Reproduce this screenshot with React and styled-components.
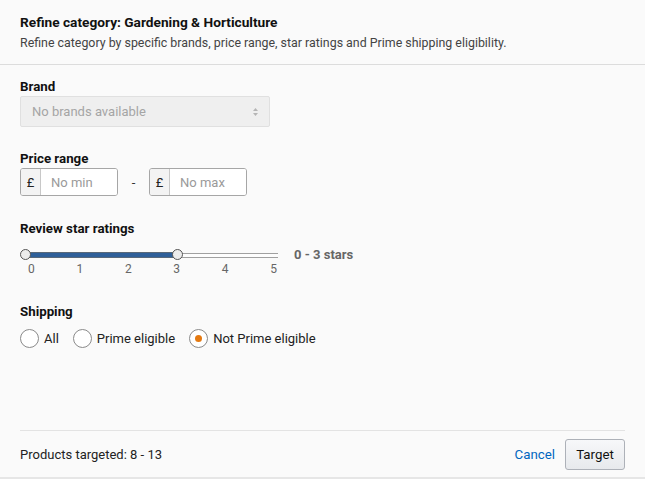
import React from "react";
import styled, { createGlobalStyle } from "styled-components";

const GlobalStyle = createGlobalStyle`
  html, body {
    margin: 0;
    padding: 0;
    background: #fafafa;
  }
  body {
    font-family: Roboto, "Noto Sans", sans-serif;
    color: #111;
  }
  * { box-sizing: border-box; }
`;

const Panel = styled.div`
  width: 645px;
  height: 479px;
  display: flex;
  flex-direction: column;
  background: #fafafa;
  border-bottom: 2px solid #e6e6e6;
`;

const Header = styled.div`
  height: 65px;
  padding: 14px 20px 0;
  border-bottom: 1px solid #dcdcdc;
`;

const Title = styled.h1`
  margin: 0;
  font-size: 13.7px;
  font-weight: 700;
  line-height: 17px;
`;

const Subtitle = styled.p`
  margin: 4px 0 0;
  font-size: 12.4px;
  line-height: 16px;
  color: #444;
`;

const Body = styled.div`
  flex: 1;
  padding: 13px 20px 0;
  display: flex;
  flex-direction: column;
`;

const Section = styled.div`
  display: flex;
  flex-direction: column;
  margin-top: ${(p) => p.$gap || 0}px;
`;

const Label = styled.div`
  font-size: 13.3px;
  font-weight: 700;
  line-height: 17px;
  margin-bottom: 1px;
`;

const Select = styled.div`
  width: 250px;
  height: 31px;
  display: flex;
  align-items: center;
  justify-content: space-between;
  padding: 0 10px 0 11px;
  background: #efefef;
  border: 1px solid #e0e0e0;
  border-radius: 2px;
  color: #a5a5a5;
  font-size: 13px;
`;

const Row = styled.div`
  display: flex;
  align-items: center;
`;

const PriceGroup = styled.div`
  display: flex;
  width: 98px;
  height: 28px;
  border: 1px solid #a6a6a6;
  border-radius: 3px;
  background: #fff;
  overflow: hidden;
`;

const Currency = styled.span`
  width: 20px;
  display: flex;
  align-items: center;
  justify-content: center;
  background: #f3f3f3;
  border-right: 1px solid #c8c8c8;
  font-size: 13px;
  color: #222;
`;

const PriceInput = styled.input`
  flex: 1;
  min-width: 0;
  border: none;
  outline: none;
  padding: 0 0 0 10px;
  font: inherit;
  font-size: 13px;
  background: #fff;
  &::placeholder { color: #9a9a9a; }
`;

const Dash = styled.span`
  width: 31px;
  text-align: center;
  font-size: 13px;
  color: #333;
`;

const SliderRow = styled.div`
  display: flex;
  align-items: flex-start;
  margin-top: 12px;
`;

const SliderWrap = styled.div`
  width: 258px;
  display: flex;
  flex-direction: column;
`;

const Track = styled.div`
  position: relative;
  margin-left: 5px;
  width: 253px;
  height: 10px;
  display: flex;
  align-items: center;
`;

const Rail = styled.div`
  width: 100%;
  height: 5px;
  border-top: 1px solid #a0a0a0;
  border-bottom: 1px solid #a0a0a0;
  background: #fdfdfd;
`;

const Fill = styled.div`
  position: absolute;
  left: 0;
  top: 2px;
  height: 6px;
  background: #2e5f99;
  border-top: 1px solid #586878;
  border-bottom: 1px solid #586878;
`;

const Handle = styled.div`
  position: absolute;
  top: 0;
  width: 11px;
  height: 11px;
  margin: -1px 0 0 -5px;
  border-radius: 50%;
  border: 1px solid #555;
  background: #ececec;
`;

const Ticks = styled.div`
  display: flex;
  justify-content: space-between;
  padding: 0 1px 0 8px;
  margin-top: 2px;
  font-size: 12px;
  line-height: 14px;
  color: #666;
`;

const RangeText = styled.span`
  margin-left: 16px;
  font-size: 13px;
  font-weight: 700;
  color: #666;
  line-height: 10px;
`;

const Radios = styled.div`
  display: flex;
  align-items: center;
  gap: 14px;
  margin-top: 8px;
`;

const RadioLabel = styled.label`
  display: flex;
  align-items: center;
  gap: 5px;
  font-size: 13px;
  color: #222;
`;

const Circle = styled.span`
  width: 19px;
  height: 19px;
  border-radius: 50%;
  border: 1px solid #8a8a8a;
  background: #fff;
  display: flex;
  align-items: center;
  justify-content: center;
  &::after {
    content: "";
    width: 7px;
    height: 7px;
    border-radius: 50%;
    background: ${(p) => (p.$checked ? "#e47911" : "transparent")};
  }
`;

const Footer = styled.div`
  margin: 0 20px;
  height: 47px;
  border-top: 1px solid #e3e3e3;
  display: flex;
  align-items: center;
  justify-content: space-between;
`;

const Count = styled.span`
  font-size: 13px;
  color: #222;
`;

const Actions = styled.div`
  display: flex;
  align-items: center;
  gap: 10px;
`;

const CancelLink = styled.a`
  color: #0066c0;
  font-size: 13.3px;
  text-decoration: none;
`;

const TargetButton = styled.button`
  height: 31px;
  width: 60px;
  padding: 0;
  border: 1px solid #adb1b8;
  border-radius: 3px;
  background: linear-gradient(#f7f8fa, #e7e9ec);
  font: inherit;
  font-size: 13.3px;
  color: #111;
`;

const ticks = [0, 1, 2, 3, 4, 5];

export default function App() {
  const max = 3;
  const pct = (max / 5) * 100;
  return (
    <>
      <GlobalStyle />
      <Panel>
        <Header>
          <Title>Refine category: Gardening &amp; Horticulture</Title>
          <Subtitle>
            Refine category by specific brands, price range, star ratings and Prime shipping eligibility.
          </Subtitle>
        </Header>
        <Body>
          <Section>
            <Label>Brand</Label>
            <Select>
              No brands available
              <svg width="7" height="10" viewBox="0 0 7 10">
                <path d="M3.5 1 L6 4 H1 Z M3.5 9 L6 6 H1 Z" fill="#b5b5b5" />
              </svg>
            </Select>
          </Section>
          <Section $gap={23}>
            <Label>Price range</Label>
            <Row>
              <PriceGroup>
                <Currency>£</Currency>
                <PriceInput placeholder="No min" />
              </PriceGroup>
              <Dash>-</Dash>
              <PriceGroup>
                <Currency>£</Currency>
                <PriceInput placeholder="No max" />
              </PriceGroup>
            </Row>
          </Section>
          <Section $gap={24}>
            <Label>Review star ratings</Label>
            <SliderRow>
              <SliderWrap>
                <Track>
                  <Rail />
                  <Fill style={{ width: `${pct}%` }} />
                  <Handle style={{ left: 0 }} />
                  <Handle style={{ left: `${pct}%` }} />
                </Track>
                <Ticks>
                  {ticks.map((t) => (
                    <span key={t}>{t}</span>
                  ))}
                </Ticks>
              </SliderWrap>
              <RangeText>0 - 3 stars</RangeText>
            </SliderRow>
          </Section>
          <Section $gap={27}>
            <Label>Shipping</Label>
            <Radios>
              <RadioLabel>
                <Circle />
                All
              </RadioLabel>
              <RadioLabel>
                <Circle />
                Prime eligible
              </RadioLabel>
              <RadioLabel>
                <Circle $checked />
                Not Prime eligible
              </RadioLabel>
            </Radios>
          </Section>
        </Body>
        <Footer>
          <Count>Products targeted: 8 - 13</Count>
          <Actions>
            <CancelLink href="#">Cancel</CancelLink>
            <TargetButton>Target</TargetButton>
          </Actions>
        </Footer>
      </Panel>
    </>
  );
}
